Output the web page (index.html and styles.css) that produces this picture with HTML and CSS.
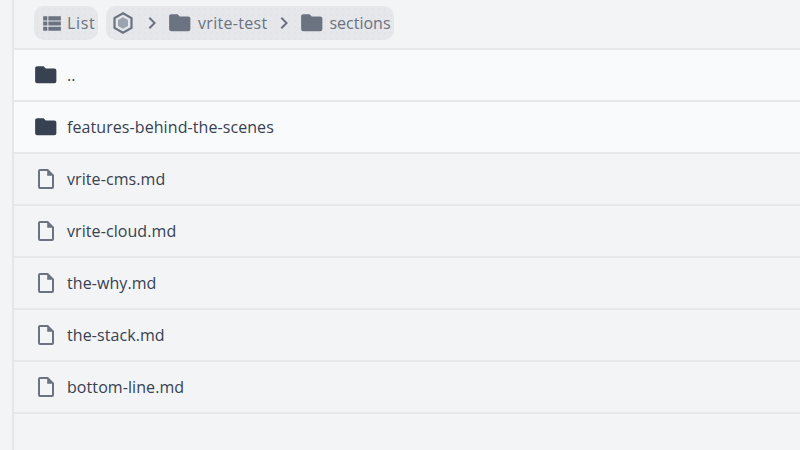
FILE: index.html
```html
<!DOCTYPE html>
<html lang="en">
<head>
<meta charset="utf-8">
<title>Files</title>
<link rel="stylesheet" href="styles.css">
</head>
<body>
<div class="app">
  <aside class="rail"></aside>
  <main class="main">
    <header class="toolbar">
      <div class="pill pill-list">
        <svg class="icon icon-list" viewBox="0 0 24 24"><path d="M9,5V9H21V5M9,19H21V15H9M9,14H21V10H9M4,9H8V5H4M4,19H8V15H4M4,14H8V10H4V14Z"/></svg>
        <span class="label-list">List</span>
      </div>
      <nav class="pill pill-path">
        <svg class="icon logo" viewBox="0 0 24 24"><path class="hex-outer" d="M12 2.2 20.5 7.1V16.9L12 21.8 3.5 16.9V7.1Z"/><path class="hex-inner" d="M12 6.2 17 9.1V14.9L12 17.8 7 14.9V9.1Z"/></svg>
        <svg class="icon chevron" viewBox="0 0 24 24"><path d="M8.59,16.58L13.17,12L8.59,7.41L10,6L16,12L10,18L8.59,16.58Z"/></svg>
        <svg class="icon folder" viewBox="0 0 24 24"><path d="M10,4H4C2.89,4 2,4.89 2,6V18A2,2 0 0,0 4,20H20A2,2 0 0,0 22,18V8C22,6.89 21.1,6 20,6H12L10,4Z"/></svg>
        <span class="label label-wide">vrite-test</span>
        <svg class="icon chevron chevron-next" viewBox="0 0 24 24"><path d="M8.59,16.58L13.17,12L8.59,7.41L10,6L16,12L10,18L8.59,16.58Z"/></svg>
        <svg class="icon folder" viewBox="0 0 24 24"><path d="M10,4H4C2.89,4 2,4.89 2,6V18A2,2 0 0,0 4,20H20A2,2 0 0,0 22,18V8C22,6.89 21.1,6 20,6H12L10,4Z"/></svg>
        <span class="label">sections</span>
      </nav>
    </header>
    <ul class="list">
      <li class="row row-dir"><svg class="icon folder" viewBox="0 0 24 24"><path d="M10,4H4C2.89,4 2,4.89 2,6V18A2,2 0 0,0 4,20H20A2,2 0 0,0 22,18V8C22,6.89 21.1,6 20,6H12L10,4Z"/></svg><span>..</span></li>
      <li class="row row-dir"><svg class="icon folder" viewBox="0 0 24 24"><path d="M10,4H4C2.89,4 2,4.89 2,6V18A2,2 0 0,0 4,20H20A2,2 0 0,0 22,18V8C22,6.89 21.1,6 20,6H12L10,4Z"/></svg><span>features-behind-the-scenes</span></li>
      <li class="row"><svg class="icon file" viewBox="0 0 24 24"><path d="M14,2H6A2,2 0 0,0 4,4V20A2,2 0 0,0 6,22H18A2,2 0 0,0 20,20V8L14,2M18,20H6V4H13.2V8.8H18V20Z"/></svg><span>vrite-cms.md</span></li>
      <li class="row"><svg class="icon file" viewBox="0 0 24 24"><path d="M14,2H6A2,2 0 0,0 4,4V20A2,2 0 0,0 6,22H18A2,2 0 0,0 20,20V8L14,2M18,20H6V4H13.2V8.8H18V20Z"/></svg><span>vrite-cloud.md</span></li>
      <li class="row"><svg class="icon file" viewBox="0 0 24 24"><path d="M14,2H6A2,2 0 0,0 4,4V20A2,2 0 0,0 6,22H18A2,2 0 0,0 20,20V8L14,2M18,20H6V4H13.2V8.8H18V20Z"/></svg><span>the-why.md</span></li>
      <li class="row"><svg class="icon file" viewBox="0 0 24 24"><path d="M14,2H6A2,2 0 0,0 4,4V20A2,2 0 0,0 6,22H18A2,2 0 0,0 20,20V8L14,2M18,20H6V4H13.2V8.8H18V20Z"/></svg><span>the-stack.md</span></li>
      <li class="row"><svg class="icon file" viewBox="0 0 24 24"><path d="M14,2H6A2,2 0 0,0 4,4V20A2,2 0 0,0 6,22H18A2,2 0 0,0 20,20V8L14,2M18,20H6V4H13.2V8.8H18V20Z"/></svg><span>bottom-line.md</span></li>
    </ul>
  </main>
</div>
</body>
</html>
```
FILE: styles.css
```css
* { box-sizing: border-box; }
html, body { margin: 0; height: 100%; overflow: hidden; }
body {
  background: #f3f4f6;
  color: #374151;
  font-family: "Open Sans", "Liberation Sans", sans-serif;
  font-size: 16px;
}
.app { display: flex; height: 450px; }
.rail { width: 12px; flex: none; background: #f3f4f6; }
.main { flex: 1; min-width: 0; border-left: 2px solid #e5e7eb; }
.toolbar {
  display: flex;
  align-items: center;
  gap: 8px;
  height: 50px;
  padding: 0 20px 2px;
  border-bottom: 2px solid #e5e7eb;
}
.pill {
  display: flex;
  align-items: center;
  height: 34px;
  border-radius: 10px;
  color: #6b7280;
  background-color: #e5e7eb;
  background-image: radial-gradient(circle, #dadde2 0.5px, transparent 0.8px);
  background-size: 6px 6px;
}
.pill-list { width: 64px; padding-left: 6px; gap: 4px; }
.pill-path { width: 288px; padding-left: 5px; }
.icon { width: 24px; height: 24px; flex: none; fill: currentColor; display: block; }
.folder { width: 25.5px; height: 25.5px; margin: 0 -0.75px; }
.icon-list { width: 25px; height: 25px; margin-left: -1px; margin-right: -1px; }
.label-list { letter-spacing: 0.7px; }
.logo { margin-right: 5px; }
.hex-outer { fill: #e5e7eb; stroke: currentColor; stroke-width: 2.2; }
.hex-inner { fill: #9ca3af; }
.chevron { margin-right: 4px; }
.chevron-next { margin-left: 5px; margin-right: 3px; }
.label { margin-left: 6px; }
.label-wide { letter-spacing: 0.3px; }
.list { list-style: none; margin: 0; padding: 0; }
.row {
  display: flex;
  align-items: center;
  gap: 9px;
  height: 52px;
  padding: 0 20px;
  border-bottom: 2px solid #e5e7eb;
  letter-spacing: 0.08px;
}
.row-dir { background: #f9fafb; }
.file { color: #6b7280; }
```
